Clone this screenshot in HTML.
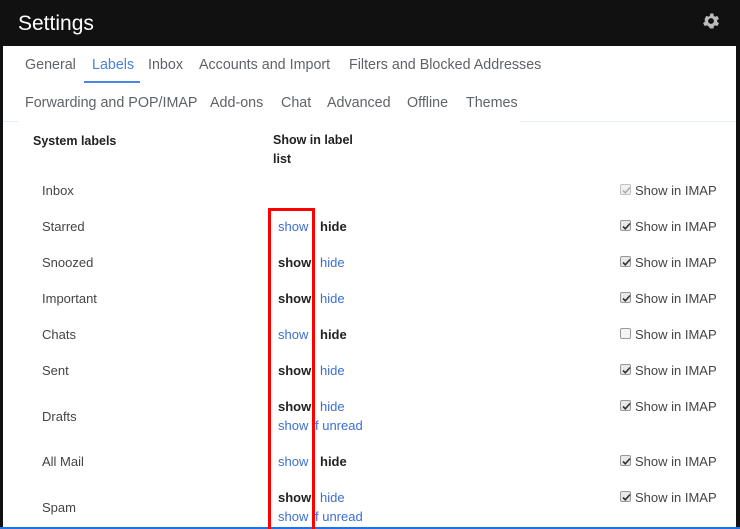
<!DOCTYPE html>
<html><head><style>
*{margin:0;padding:0;box-sizing:border-box}
html,body{width:740px;height:529px;overflow:hidden}
body{background:#111;font-family:"Liberation Sans",Arial,sans-serif;position:relative}
.main{position:absolute;left:3px;top:46px;width:733px;height:481px;background:#fff}
.blue{position:absolute;left:0;top:527px;width:740px;height:2px;background:#1a73e8}
.t{position:absolute;white-space:nowrap;font-size:13px;color:#222;line-height:16px}
.tab{font-size:14.3px;color:#5f6368}
.l{color:#3b6fd0}
.b{font-weight:bold;color:#222}
.k{color:#444}
.cb{position:absolute;width:11px;height:11px;border:1px solid #999;border-radius:2px;background:#e8e8e8}
.cb svg{position:absolute;left:0;top:0}
</style></head><body>
<div class="t" style="left:18px;top:12px;font-size:21px;color:#fff;line-height:24px">Settings</div>
<svg style="position:absolute;left:701px;top:11px" width="20" height="20" viewBox="0 0 24 24"><path fill="#bbb" d="M19.4 13a7.5 7.5 0 0 0 0-2l2.1-1.6-2-3.5-2.5 1a7.3 7.3 0 0 0-1.7-1L15 3h-4l-.4 2.9a7.3 7.3 0 0 0-1.7 1l-2.5-1-2 3.5L4.6 11a7.5 7.5 0 0 0 0 2l-2.1 1.6 2 3.5 2.5-1a7.3 7.3 0 0 0 1.7 1L11 21h4l.4-2.9a7.3 7.3 0 0 0 1.7-1l2.5 1 2-3.5zM12 15.5a3.5 3.5 0 1 1 0-7 3.5 3.5 0 0 1 0 7z" transform="translate(0 0)"/></svg>
<div class="main"></div>
<div class="blue"></div>
<div style="position:absolute;left:3px;top:121px;width:15px;height:1px;background:#e3eef8"></div>
<div style="position:absolute;left:520px;top:121px;width:216px;height:1px;background:#e3eef8"></div>
<div style="position:absolute;left:84px;top:81px;width:56px;height:2px;background:#4a86e8"></div>
<div class="t tab" style="left:25px;top:57px">General</div>
<div class="t tab" style="left:92px;top:57px;color:#4a80e0">Labels</div>
<div class="t tab" style="left:148px;top:57px">Inbox</div>
<div class="t tab" style="left:199px;top:57px">Accounts and Import</div>
<div class="t tab" style="left:349px;top:57px">Filters and Blocked Addresses</div>
<div class="t tab" style="left:25px;top:95px">Forwarding and POP/IMAP</div>
<div class="t tab" style="left:210px;top:95px">Add-ons</div>
<div class="t tab" style="left:281px;top:95px">Chat</div>
<div class="t tab" style="left:327px;top:95px">Advanced</div>
<div class="t tab" style="left:407px;top:95px">Offline</div>
<div class="t tab" style="left:466px;top:95px">Themes</div>
<div class="t b" style="left:33px;top:133px;font-size:12.5px">System labels</div>
<div class="t b" style="left:273px;top:131px;font-size:12.5px;line-height:19px">Show in label<br>list</div>

<div class="t k" style="left:42px;top:183px">Inbox</div>
<div class="t k" style="left:42px;top:219px">Starred</div>
<div class="t k" style="left:42px;top:255px">Snoozed</div>
<div class="t k" style="left:42px;top:291px">Important</div>
<div class="t k" style="left:42px;top:327px">Chats</div>
<div class="t k" style="left:42px;top:363px">Sent</div>
<div class="t k" style="left:42px;top:409px">Drafts</div>
<div class="t k" style="left:42px;top:454px">All Mail</div>
<div class="t k" style="left:42px;top:500px">Spam</div>

<div class="t l" style="left:278px;top:219px">show</div><div class="t b" style="left:320px;top:219px">hide</div>
<div class="t b" style="left:278px;top:255px">show</div><div class="t l" style="left:320px;top:255px">hide</div>
<div class="t b" style="left:278px;top:291px">show</div><div class="t l" style="left:320px;top:291px">hide</div>
<div class="t l" style="left:278px;top:327px">show</div><div class="t b" style="left:320px;top:327px">hide</div>
<div class="t b" style="left:278px;top:363px">show</div><div class="t l" style="left:320px;top:363px">hide</div>
<div class="t b" style="left:278px;top:399px">show</div><div class="t l" style="left:320px;top:399px">hide</div>
<div class="t l" style="left:278px;top:418px">show</div><div class="t l" style="left:315px;top:418px">f unread</div>
<div class="t l" style="left:278px;top:454px">show</div><div class="t b" style="left:320px;top:454px">hide</div>
<div class="t b" style="left:278px;top:490px">show</div><div class="t l" style="left:320px;top:490px">hide</div>
<div class="t l" style="left:278px;top:509px">show</div><div class="t l" style="left:315px;top:509px">f unread</div>

<div style="position:absolute;left:268px;top:208px;width:47px;height:321px;border:3px solid #f00;border-bottom:none"></div>

<div class="cb" style="left:620px;top:184px;opacity:.6"><svg width="11" height="11" viewBox="0 0 11 11"><path d="M2 5.5l2.3 2.3L9 2.5" stroke="#777" stroke-width="1.6" fill="none"/></svg></div>
<div class="t k" style="left:635px;top:183px">Show in IMAP</div>
<div class="cb" style="left:620px;top:220px"><svg width="11" height="11" viewBox="0 0 11 11"><path d="M2 5.5l2.3 2.3L9 2.5" stroke="#333" stroke-width="1.6" fill="none"/></svg></div>
<div class="t k" style="left:635px;top:219px">Show in IMAP</div>
<div class="cb" style="left:620px;top:256px"><svg width="11" height="11" viewBox="0 0 11 11"><path d="M2 5.5l2.3 2.3L9 2.5" stroke="#333" stroke-width="1.6" fill="none"/></svg></div>
<div class="t k" style="left:635px;top:255px">Show in IMAP</div>
<div class="cb" style="left:620px;top:292px"><svg width="11" height="11" viewBox="0 0 11 11"><path d="M2 5.5l2.3 2.3L9 2.5" stroke="#333" stroke-width="1.6" fill="none"/></svg></div>
<div class="t k" style="left:635px;top:291px">Show in IMAP</div>
<div class="cb" style="left:620px;top:328px;background:#f4f4f4"></div>
<div class="t k" style="left:635px;top:327px">Show in IMAP</div>
<div class="cb" style="left:620px;top:364px"><svg width="11" height="11" viewBox="0 0 11 11"><path d="M2 5.5l2.3 2.3L9 2.5" stroke="#333" stroke-width="1.6" fill="none"/></svg></div>
<div class="t k" style="left:635px;top:363px">Show in IMAP</div>
<div class="cb" style="left:620px;top:400px"><svg width="11" height="11" viewBox="0 0 11 11"><path d="M2 5.5l2.3 2.3L9 2.5" stroke="#333" stroke-width="1.6" fill="none"/></svg></div>
<div class="t k" style="left:635px;top:399px">Show in IMAP</div>
<div class="cb" style="left:620px;top:455px"><svg width="11" height="11" viewBox="0 0 11 11"><path d="M2 5.5l2.3 2.3L9 2.5" stroke="#333" stroke-width="1.6" fill="none"/></svg></div>
<div class="t k" style="left:635px;top:454px">Show in IMAP</div>
<div class="cb" style="left:620px;top:491px"><svg width="11" height="11" viewBox="0 0 11 11"><path d="M2 5.5l2.3 2.3L9 2.5" stroke="#333" stroke-width="1.6" fill="none"/></svg></div>
<div class="t k" style="left:635px;top:490px">Show in IMAP</div>
</body></html>
